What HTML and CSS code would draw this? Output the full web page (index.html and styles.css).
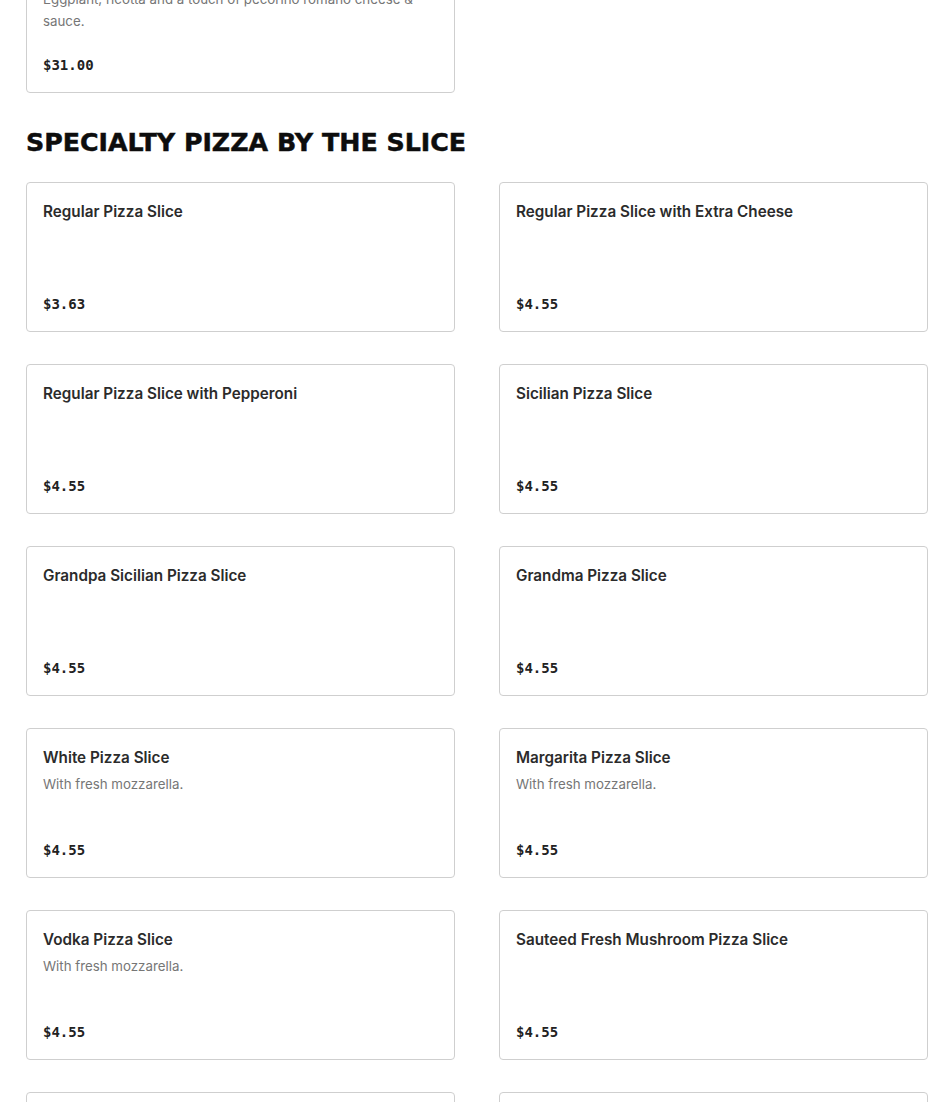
FILE: index.html
```html
<!DOCTYPE html>
<html lang="en">
<head>
<meta charset="utf-8">
<title>Menu</title>
<link rel="stylesheet" href="styles.css">
</head>
<body>
<main class="menu">
  <section class="section section--first">
    <div class="grid">
      <div class="card">
        <div class="card__body">
          <h3 class="card__title">Eggplant Pizza</h3>
          <p class="card__desc">Eggplant, ricotta and a touch of pecorino romano cheese &amp; sauce.</p>
        </div>
        <div class="card__price">$31.00</div>
      </div>
    </div>
  </section>

  <section class="section">
    <h2 class="section__title">SPECIALTY PIZZA BY THE SLICE</h2>
    <div class="grid">
      <div class="card">
        <div class="card__body"><h3 class="card__title">Regular Pizza Slice</h3></div>
        <div class="card__price">$3.63</div>
      </div>
      <div class="card">
        <div class="card__body"><h3 class="card__title">Regular Pizza Slice with Extra Cheese</h3></div>
        <div class="card__price">$4.55</div>
      </div>
      <div class="card">
        <div class="card__body"><h3 class="card__title">Regular Pizza Slice with Pepperoni</h3></div>
        <div class="card__price">$4.55</div>
      </div>
      <div class="card">
        <div class="card__body"><h3 class="card__title">Sicilian Pizza Slice</h3></div>
        <div class="card__price">$4.55</div>
      </div>
      <div class="card">
        <div class="card__body"><h3 class="card__title">Grandpa Sicilian Pizza Slice</h3></div>
        <div class="card__price">$4.55</div>
      </div>
      <div class="card">
        <div class="card__body"><h3 class="card__title">Grandma Pizza Slice</h3></div>
        <div class="card__price">$4.55</div>
      </div>
      <div class="card">
        <div class="card__body">
          <h3 class="card__title">White Pizza Slice</h3>
          <p class="card__desc">With fresh mozzarella.</p>
        </div>
        <div class="card__price">$4.55</div>
      </div>
      <div class="card">
        <div class="card__body">
          <h3 class="card__title">Margarita Pizza Slice</h3>
          <p class="card__desc">With fresh mozzarella.</p>
        </div>
        <div class="card__price">$4.55</div>
      </div>
      <div class="card">
        <div class="card__body">
          <h3 class="card__title">Vodka Pizza Slice</h3>
          <p class="card__desc">With fresh mozzarella.</p>
        </div>
        <div class="card__price">$4.55</div>
      </div>
      <div class="card">
        <div class="card__body"><h3 class="card__title">Sauteed Fresh Mushroom Pizza Slice</h3></div>
        <div class="card__price">$4.55</div>
      </div>
      <div class="card">
        <div class="card__body"><h3 class="card__title">Buffalo Chicken Pizza Slice</h3></div>
        <div class="card__price">$4.55</div>
      </div>
      <div class="card">
        <div class="card__body"><h3 class="card__title">Chicken Parm Pizza Slice</h3></div>
        <div class="card__price">$4.55</div>
      </div>
    </div>
  </section>
</main>
</body>
</html>
```

FILE: styles.css
```css
* { box-sizing: border-box; }

html, body {
  margin: 0;
  padding: 0;
  background: #ffffff;
}

body {
  font-family: "Liberation Sans", Arial, sans-serif;
  color: #2b2b2b;
}

.menu {
  width: 902px;
  margin-left: 26px;
  margin-top: -57px;
}

.section__title {
  margin: 34px 0 23px;
  font-family: "DejaVu Sans", "Liberation Sans", sans-serif;
  font-weight: 700;
  font-size: 25.3px;
  line-height: 32px;
  letter-spacing: 0;
  color: #0d0d0d;
  -webkit-text-stroke: 0.5px #0d0d0d;
}

.grid {
  display: grid;
  grid-template-columns: 429px 429px;
  column-gap: 44px;
  row-gap: 32px;
}

.card {
  display: flex;
  flex-direction: column;
  min-height: 150px;
  padding: 16px 16px 17px;
  border: 1px solid #cfcfcf;
  border-radius: 4px;
  background: #fff;
}

.card__body {
  flex: 1;
}

.card__title {
  margin: 0;
  font-size: 15.25px;
  line-height: 25px;
  font-weight: 600;
  font-family: "Inter", "Liberation Sans", sans-serif;
  color: #2b2b2b;
}

.card__desc {
  margin: 3px 0 0;
  font-size: 13.3px;
  line-height: 22px;
  color: #767676;
  font-family: "Inter", "Liberation Sans", sans-serif;
}

.card__price {
  padding-top: 23px;
  font-family: "DejaVu Sans Mono", "Liberation Mono", monospace;
  font-weight: 700;
  font-size: 14px;
  line-height: 20px;
  color: #222222;
}
```
